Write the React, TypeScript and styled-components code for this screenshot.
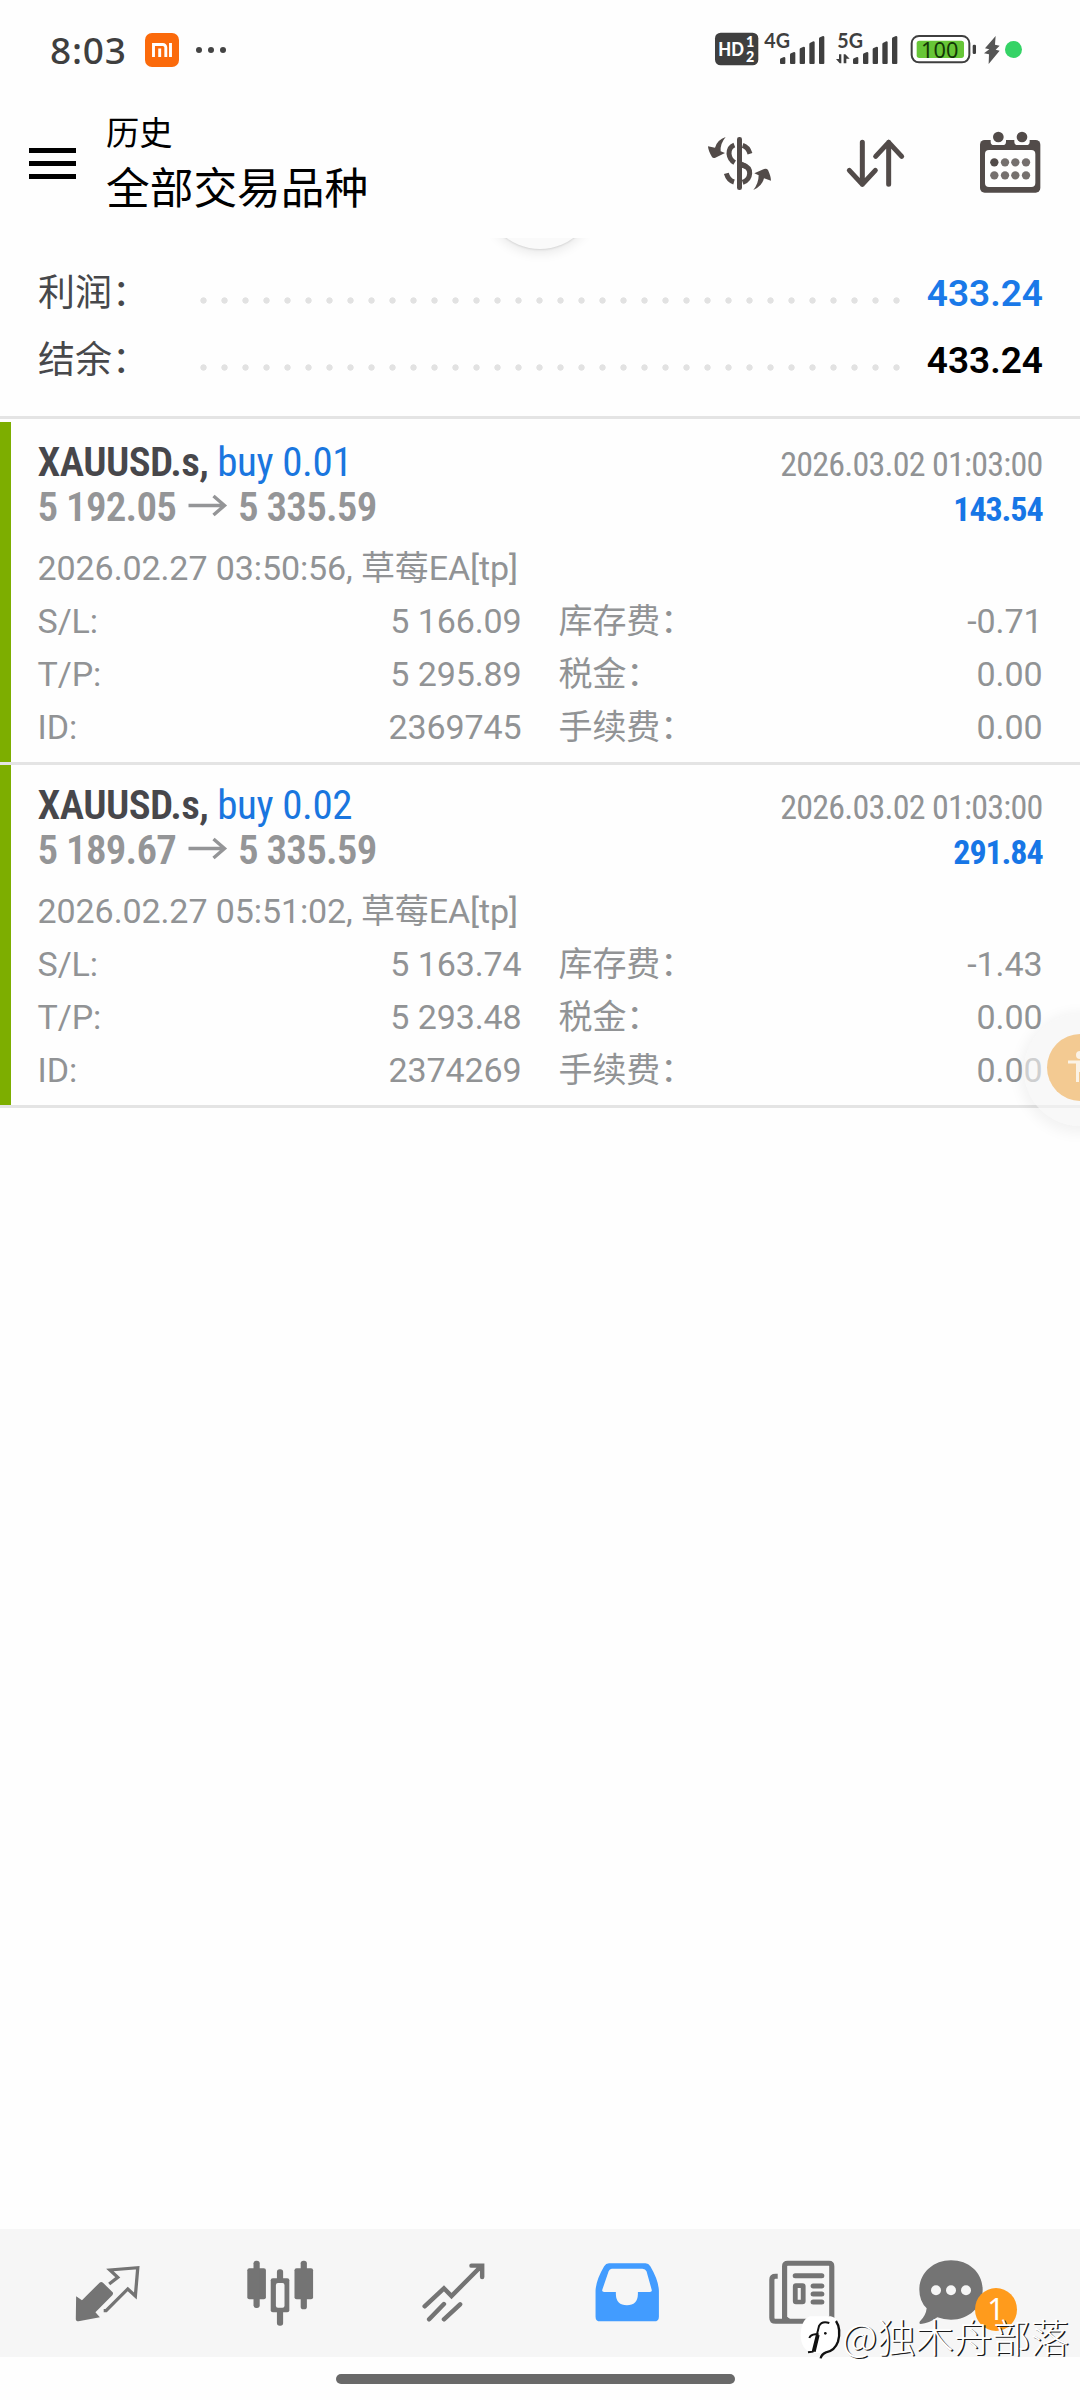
import React from "react";
import styled, { createGlobalStyle } from "styled-components";

const sans = `Roboto, "Noto Sans CJK SC", sans-serif`;
const condensed = `"Roboto Condensed", "Noto Sans CJK SC", sans-serif`;
const system = `"Noto Sans", "Noto Sans CJK SC", sans-serif`;

const GlobalStyle = createGlobalStyle`
  * { box-sizing: border-box; }
  body { margin: 0; background: #fefefe; }
`;

const Screen = styled.div`
  position: relative;
  display: flex;
  flex-direction: column;
  width: 1080px;
  height: 2400px;
  overflow: hidden;
  background: #fefefe;
  font-family: ${sans};
  white-space: nowrap;
`;

const Icon = styled.svg<{ $w: number; $h: number }>`
  display: block;
  flex: none;
  width: ${(p) => p.$w}px;
  height: ${(p) => p.$h}px;
  overflow: visible;
`;

/* ---------- status bar ---------- */

const StatusBar = styled.div`
  display: flex;
  align-items: center;
  height: 100px;
  padding: 0 58px 0 50px;
  color: #3f3f3f;
`;

const Clock = styled.div`
  width: 95px;
  font: 500 37px/100px ${system};
  letter-spacing: 0.8px;
`;

const MiBadge = styled.div`
  display: flex;
  align-items: center;
  justify-content: center;
  width: 34px;
  height: 34px;
  border-radius: 7px;
  background: #fb6a0b;
`;

const More = styled.div`
  display: flex;
  gap: 6px;
  margin-left: 17px;
`;

const MoreDot = styled.i`
  width: 6px;
  height: 6px;
  border-radius: 50%;
  background: #444;
`;

const StatusRight = styled.div`
  display: flex;
  align-items: center;
  margin-left: auto;
  height: 100px;
  padding-bottom: 2px;
`;

const Slot = styled.div<{ $gap: number }>`
  margin-left: ${(p) => p.$gap}px;
`;

const PrivacyDot = styled.div`
  width: 17px;
  height: 17px;
  margin-left: 5px;
  border-radius: 50%;
  background: #35d366;
`;

/* ---------- header ---------- */

const Header = styled.header`
  display: flex;
  align-items: flex-start;
  height: 138px;
  padding: 0 38px 0 29px;
`;

const MenuButton = styled.div`
  display: flex;
  flex-direction: column;
  gap: 8px;
  width: 47px;
  margin-top: 47.5px;
`;

const MenuLine = styled.i`
  height: 5.3px;
  background: #000;
`;

const Titles = styled.div`
  margin: 4px 0 0 30px;
  color: #000;
  font-family: "Noto Sans CJK SC", sans-serif;
`;

const Caption = styled.div`
  font-size: 33.3px;
  line-height: 53px;
`;

const Title = styled.div`
  font-size: 43.7px;
  line-height: 56px;
`;

const Actions = styled.div`
  display: flex;
  gap: 70px;
  margin: 30px 0 0 auto;
`;

/* ---------- summary ---------- */

const Summary = styled.section`
  position: relative;
  height: 181px;
  padding: 21.5px 37px 0 38px;
  border-bottom: 3px solid #e4e4e4;
  overflow: hidden;
`;

const PullKnob = styled.div`
  position: absolute;
  left: 484px;
  top: -101px;
  width: 112px;
  height: 112px;
  border-radius: 50%;
  background: #fafafa;
  box-shadow: 0 1px 2px rgba(0, 0, 0, 0.1), 0 4px 12px rgba(0, 0, 0, 0.09);
`;

const SummaryRow = styled.div`
  display: grid;
  grid-template-columns: 154.5px 714px 1fr;
  height: 67px;
  font-size: 37px;
  line-height: 67px;
`;

const SummaryLabel = styled.span`
  color: #47484b;
`;

const Leader = styled.i`
  background: radial-gradient(circle at 50% 50%, #e2e2e2 2.8px, transparent 3.5px) 0 37.5px / 21px 7px repeat-x;
`;

const SummaryValue = styled.b<{ $color: string }>`
  color: ${(p) => p.$color};
  font-weight: 600;
  text-align: right;
`;

/* ---------- trades ---------- */

const List = styled.main`
  flex: 1;
  padding-top: 3px;
`;

const Trade = styled.article`
  display: flex;
  height: 343px;
  border-bottom: 3px solid #e4e4e4;
`;

const Stripe = styled.i`
  width: 10.6px;
  background: #7dae00;
`;

const TradeBody = styled.div`
  flex: 1;
  padding: 18px 37.5px 0 27px;
`;

const HeadLine = styled.div`
  display: flex;
  justify-content: space-between;
  align-items: baseline;
  height: 45px;
  font-family: ${condensed};
  line-height: 45px;
`;

const Symbol = styled.span`
  color: #47474b;
  font-size: 41px;
  font-weight: 600;
  letter-spacing: -0.6px;
`;

const Side = styled.span`
  color: #1a76df;
  font-weight: 400;
  letter-spacing: -0.4px;
`;

const Prices = styled.span`
  display: flex;
  align-items: center;
  color: #949597;
  font-size: 41px;
  font-weight: 600;
  letter-spacing: -0.8px;
`;

const ClosedAt = styled.span`
  color: #919395;
  font-size: 34px;
  letter-spacing: -0.75px;
`;

const Profit = styled.span`
  color: #1776e6;
  font-size: 34px;
  font-weight: 700;
  letter-spacing: -1.1px;
`;

const Comment = styled.div`
  margin-top: 12px;
  color: #919395;
  font-size: 34px;
  letter-spacing: -0.1px;
  line-height: 53px;
`;

const Details = styled.div`
  display: grid;
  grid-template-columns: 1fr 1fr;
  column-gap: 37px;
  color: #919395;
  font-size: 34px;
  letter-spacing: -0.1px;
  line-height: 53px;
`;

const Detail = styled.div`
  display: flex;
  justify-content: space-between;
`;

/* ---------- floating assistant ---------- */

const Assist = styled.div`
  position: absolute;
  left: 1024px;
  top: 1014px;
  display: flex;
  align-items: center;
  justify-content: center;
  width: 112px;
  height: 112px;
  padding-bottom: 6px;
  border-radius: 50%;
  background: rgba(243, 243, 243, 0.62);
  box-shadow: 0 3px 14px 4px rgba(0, 0, 0, 0.05);
`;

const AssistCore = styled.div`
  display: flex;
  align-items: center;
  justify-content: center;
  width: 67px;
  height: 67px;
  border-radius: 50%;
  background: #f3ca92;
`;

/* ---------- bottom ---------- */

const NavBar = styled.nav`
  display: flex;
  align-items: flex-start;
  gap: 103.4px;
  height: 128px;
  padding: 27.5px 0 0 72.3px;
  background: #f6f6f6;
`;

const ChatItem = styled.div`
  position: relative;
  margin-left: -23.6px;
`;

const Badge = styled.span`
  position: absolute;
  left: 58px;
  top: 31px;
  width: 42px;
  height: 43px;
  border-radius: 50%;
  background: #ff9b1c;
  color: #fff;
  font: 400 30px/41px ${system};
  text-align: center;
`;

const GestureArea = styled.div`
  display: flex;
  justify-content: center;
  height: 43px;
  padding: 17px 9px 0 0;
`;

const GestureBar = styled.div`
  width: 399px;
  height: 10px;
  border-radius: 5px;
  background: #696969;
`;

const Watermark = styled.div`
  position: absolute;
  left: 800px;
  top: 2309px;
  display: flex;
  align-items: center;
  gap: 1px;
  height: 54px;
  color: #fff;
  font: 300 38.4px/54px "Noto Sans CJK SC", sans-serif;
  text-shadow: 1.5px 1px 0 #1c1c1c;
`;

const WatermarkText = styled.span`
  position: relative;
  top: -1px;
`;

const ACCENT = "#524b49";
const GREY = "#747474";

const MiIcon = () => (
  <Icon $w={20} $h={14} viewBox="0 0 20 14" fill="none" stroke="#fff" strokeWidth="2.9">
    <path d="M1.5 14V1.5h9.3a3 3 0 0 1 3 3V14M7.7 5.4V14M18.5 0v14" />
  </Icon>
);

const HdIcon = () => (
  <Icon $w={43.3} $h={34} viewBox="77 96 130 102">
    <rect x="77" y="98" width="130" height="98" rx="17" fill="#3f3f3f" />
    <g fill="#fff" fontFamily="Lato, sans-serif" fontWeight="900">
      <text x="87" y="168" fontSize="57" textLength="77" lengthAdjust="spacingAndGlyphs">HD</text>
      <text x="170" y="142" fontSize="43">1</text>
      <text x="170" y="186" fontSize="43">2</text>
    </g>
  </Icon>
);

const BARS = [
  [0, 171],
  [30, 156],
  [59, 140],
  [88, 124],
  [117, 108],
];

const SignalIcon = ({ label, data }: { label: string; data?: boolean }) => (
  <Icon $w={61} $h={34} viewBox="222 96 183 102" fill="#3f3f3f">
    <text x="223" y="144" fontSize="60" fontWeight="700" fontFamily="Lato, sans-serif" textLength="77" lengthAdjust="spacingAndGlyphs">
      {label}
    </text>
    {BARS.map(([x, y]) => (
      <path key={x} d={`M${270 + x} ${y + 8}q0-3 3-4l9-4q4 0 4 3V189q0 3-3 3h-10q-3 0-3-3z`} />
    ))}
    {data && (
      <path d="M228 163h7v27h-5l-11-13h9zM242 190V163h5l13 13h-10v14z" />
    )}
  </Icon>
);

const BatteryIcon = () => (
  <Icon $w={66.7} $h={34} viewBox="660 96 200 102">
    <rect x="665" y="108" width="173" height="79" rx="22" fill="#fff" stroke="#3f3f3f" strokeWidth="6" />
    <rect x="680" y="122" width="142" height="52" rx="8" fill="#67c637" />
    <rect x="848" y="134" width="10" height="28" rx="4" fill="#3f3f3f" />
    <text x="693" y="173" fontSize="67" fill="#123806" fontFamily="Noto Sans, sans-serif" textLength="112" lengthAdjust="spacingAndGlyphs">
      100
    </text>
  </Icon>
);

const BoltIcon = () => (
  <Icon $w={17.3} $h={34} viewBox="878 96 52 102" fill="#555">
    <path d="M916 108L884 145l13 3-16 12 15 3-1 29 33-40-12-3 12-12-14-3z" />
  </Icon>
);

const CurrencyIcon = () => (
  <Icon $w={68} $h={64} viewBox="48 390 204 192" fill={ACCENT}>
    <rect x="141" y="411" width="15" height="159" rx="7" />
    <path
      d="M133 435Q117 441 117 461Q119 479 134 488M158 436Q174 441 180 461M158 495Q180 502 179 520Q178 540 158 547M109 520Q115 541 132 546"
      fill="none"
      stroke={ACCENT}
      strokeWidth="15"
    />
    <path d="M156 485l14 7v16l-14-5z" />
    <path d="M107 411Q82 419 75 443L54 439Q54 451 66 471Q69 475 76 473L105 459L92 454Q90 431 107 411z" />
    <path d="M190 570Q216 559 222 535L243 542Q243 530 234 510Q230 504 222 507L193 520L206 526Q206 550 190 570z" />
  </Icon>
);

const SortIcon = () => (
  <Icon $w={64} $h={64} viewBox="462 390 192 192" fill="none" stroke={ACCENT} strokeWidth="15" strokeLinecap="round" strokeLinejoin="round">
    <path d="M517 427V553M478 511L517 553L556 511M596 553V427M557 469L596 427L635 469" />
  </Icon>
);

const CalendarIcon = () => (
  <Icon $w={64} $h={64} viewBox="864 390 192 192">
    <rect x="870" y="420" width="181" height="158" rx="14" fill={ACCENT} />
    <rect x="885" y="450" width="151" height="111" rx="12" fill="#fefefe" />
    {[925, 996].map((x) => (
      <g key={x}>
        <path d={`M${x - 23} 419h46v6q0 10-10 10h-26q-10 0-10-10z`} fill="#fefefe" />
        <circle cx={x} cy="411" r="16" fill={ACCENT} />
      </g>
    ))}
    {[913, 945, 976, 1008].map((x, i) => (
      <g key={x} fill="#75706e">
        <circle cx={x} cy="487" r="12.5" fill={i === 0 ? ACCENT : undefined} />
        <circle cx={x} cy="526" r="12.5" />
      </g>
    ))}
  </Icon>
);

const QuotesIcon = () => (
  <Icon $w={70.25} $h={70} viewBox="210 140 204 210" preserveAspectRatio="none">
    <path d="M222 258L239 270L290 217Q295 213 300 217L328 246Q331 250 327 255L278 306L291 321L229 333Q221 333 221 326z" fill={GREY} />
    <path d="M318 221L343 201L320 179L401 172L394 257L372 236L309 301H302" fill="none" stroke={GREY} strokeWidth="9.5" />
  </Icon>
);

const CandlesIcon = () => (
  <Icon $w={70.25} $h={70} viewBox="714.2 140 204 210" preserveAspectRatio="none" fill={GREY}>
    <rect x="718" y="174" width="54" height="93" rx="6" />
    <rect x="736" y="151" width="18" height="142" rx="8" />
    <rect x="855" y="174" width="54" height="93" rx="6" />
    <rect x="873" y="151" width="18" height="146" rx="8" />
    <rect x="804" y="177" width="18" height="169" rx="8" />
    <rect x="786" y="204" width="54" height="102" rx="6" />
    <rect x="801" y="218" width="25" height="74" rx="6" fill="#f6f6f6" />
  </Icon>
);

const TrendIcon = () => (
  <Icon $w={70.25} $h={70} viewBox="1218.5 140 204 210" preserveAspectRatio="none" fill="none" stroke={GREY} strokeWidth="13" strokeLinecap="round">
    <path d="M1232 288L1288 234L1310 257L1396 168M1368 166H1399V200M1245 327L1288 281M1288 327L1335 282" />
  </Icon>
);

const InboxIcon = () => (
  <Icon $w={70.25} $h={70} viewBox="154.6 140 204 210" preserveAspectRatio="none">
    <path d="M201 159H307Q316 159 321 168Q345 210 346 242V319Q346 333 332 333H175Q162 333 162 319V242Q163 210 187 168Q192 159 201 159z" fill="#429cff" />
    <path d="M209 175H298Q307 175 310 183L325 238Q327 245 320 245H285V252Q284 285 253 285Q222 285 221 252V245H187Q179 245 182 237L200 183Q203 175 209 175z" fill="#f6f6f6" />
  </Icon>
);

const NewsIcon = () => (
  <Icon $w={70.25} $h={70} viewBox="658.9 140 204 210" preserveAspectRatio="none" fill="none" stroke={GREY} strokeWidth="15">
    <path d="M710 333V168Q710 159 719 159H839Q847 159 847 168V333M690 198H684Q673 198 673 208V322Q673 333 684 333H855" />
    <path d="M716 320Q716 326 724 326M841 318Q841 326 834 326" strokeWidth="6" />
    <path d="M741 196H818M793 227H818M793 251H818M793 275H818" strokeLinecap="round" />
    <rect x="741" y="226" width="23" height="49" rx="2" strokeWidth="14" />
  </Icon>
);

const ChatIcon = () => (
  <Icon $w={100} $h={70} viewBox="411 80 300 210">
    <path d="M513 90C568 90 608 128 608 178C608 230 566 268 513 268Q491 268 472 261Q447 279 422 281Q416 280 420 273Q438 255 440 234Q418 212 418 178C418 128 460 90 513 90z" fill={GREY} />
    <g fill="#f6f6f6">
      <circle cx="468" cy="180" r="15" />
      <circle cx="513" cy="180" r="15" />
      <circle cx="558" cy="180" r="15" />
    </g>
  </Icon>
);

const PersonIcon = () => (
  <Icon $w={28} $h={34} viewBox="0 0 28 34">
    <circle cx="14" cy="5" r="4" fill="#fbf3e6" />
    <path d="M2 12H26M11.5 12V32M16.5 12V32M14 12V22" stroke="#fbf3e6" strokeWidth="3" fill="none" />
  </Icon>
);

const WatermarkLogo = () => (
  <Icon $w={41} $h={46} viewBox="60 264 123 138">
    <path d="M90 274H152Q181 280 179 318Q179 372 132 390L121 400L123 384H95Q62 372 62 330Q64 282 90 274z" fill="#fff" />
    <path d="M168 288Q184 312 174 350Q164 378 138 382Q124 388 122 400" fill="none" stroke="#111" strokeWidth="7" />
    <path d="M148 294Q126 286 117 303L98 380L84 382M88 339Q92 329 106 328H116M116 330L104 380" fill="none" stroke="#111" strokeWidth="6" />
    <circle cx="136" cy="325" r="4" fill="#111" />
  </Icon>
);

const PriceArrow = () => (
  <Icon $w={62} $h={45} viewBox="0 0 62 45" fill="none" stroke="#949597" strokeWidth="3.4">
    <path d="M12.5 20.5H49M37.5 11L48.5 20.5L37.5 30" />
  </Icon>
);

const trades = [
  {
    symbol: "XAUUSD.s,",
    side: "buy 0.01",
    open: "5 192.05",
    close: "5 335.59",
    closedAt: "2026.03.02 01:03:00",
    profit: "143.54",
    comment: "2026.02.27 03:50:56, 草莓EA[tp]",
    details: [
      ["S/L:", "5 166.09"],
      ["库存费：", "-0.71"],
      ["T/P:", "5 295.89"],
      ["税金：", "0.00"],
      ["ID:", "2369745"],
      ["手续费：", "0.00"],
    ],
  },
  {
    symbol: "XAUUSD.s,",
    side: "buy 0.02",
    open: "5 189.67",
    close: "5 335.59",
    closedAt: "2026.03.02 01:03:00",
    profit: "291.84",
    comment: "2026.02.27 05:51:02, 草莓EA[tp]",
    details: [
      ["S/L:", "5 163.74"],
      ["库存费：", "-1.43"],
      ["T/P:", "5 293.48"],
      ["税金：", "0.00"],
      ["ID:", "2374269"],
      ["手续费：", "0.00"],
    ],
  },
];

export default function App() {
  return (
    <Screen lang="zh-CN">
      <GlobalStyle />
      <StatusBar>
        <Clock>8:03</Clock>
        <MiBadge>
          <MiIcon />
        </MiBadge>
        <More>
          <MoreDot />
          <MoreDot />
          <MoreDot />
        </More>
        <StatusRight>
          <HdIcon />
          <Slot $gap={5}>
            <SignalIcon label="4G" />
          </Slot>
          <Slot $gap={12}>
            <SignalIcon label="5G" data />
          </Slot>
          <Slot $gap={12.5}>
            <BatteryIcon />
          </Slot>
          <Slot $gap={6}>
            <BoltIcon />
          </Slot>
          <PrivacyDot />
        </StatusRight>
      </StatusBar>

      <Header>
        <MenuButton>
          <MenuLine />
          <MenuLine />
          <MenuLine />
        </MenuButton>
        <Titles>
          <Caption>历史</Caption>
          <Title>全部交易品种</Title>
        </Titles>
        <Actions>
          <CurrencyIcon />
          <SortIcon />
          <CalendarIcon />
        </Actions>
      </Header>

      <Summary>
        <PullKnob />
        <SummaryRow>
          <SummaryLabel>利润：</SummaryLabel>
          <Leader />
          <SummaryValue $color="#1a79e8">433.24</SummaryValue>
        </SummaryRow>
        <SummaryRow>
          <SummaryLabel>结余：</SummaryLabel>
          <Leader />
          <SummaryValue $color="#000">433.24</SummaryValue>
        </SummaryRow>
      </Summary>

      <List>
        {trades.map((t) => (
          <Trade key={t.side}>
            <Stripe />
            <TradeBody>
              <HeadLine>
                <Symbol>
                  {t.symbol} <Side>{t.side}</Side>
                </Symbol>
                <ClosedAt>{t.closedAt}</ClosedAt>
              </HeadLine>
              <HeadLine>
                <Prices>
                  {t.open}
                  <PriceArrow />
                  {t.close}
                </Prices>
                <Profit>{t.profit}</Profit>
              </HeadLine>
              <Comment>{t.comment}</Comment>
              <Details>
                {t.details.map(([label, value]) => (
                  <Detail key={label}>
                    <span>{label}</span>
                    <span>{value}</span>
                  </Detail>
                ))}
              </Details>
            </TradeBody>
          </Trade>
        ))}
      </List>

      <NavBar>
        <QuotesIcon />
        <CandlesIcon />
        <TrendIcon />
        <InboxIcon />
        <NewsIcon />
        <ChatItem>
          <ChatIcon />
          <Badge>1</Badge>
        </ChatItem>
      </NavBar>
      <GestureArea>
        <GestureBar />
      </GestureArea>

      <Assist>
        <AssistCore>
          <PersonIcon />
        </AssistCore>
      </Assist>

      <Watermark>
        <WatermarkLogo />
        <WatermarkText>@独木舟部落</WatermarkText>
      </Watermark>
    </Screen>
  );
}
